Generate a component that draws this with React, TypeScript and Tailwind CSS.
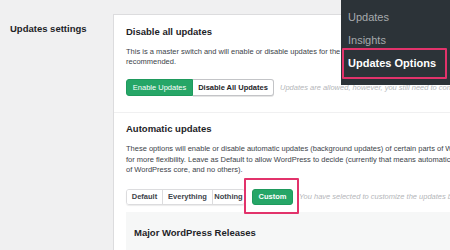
import React from 'react';

const font = { fontFamily: '"Liberation Sans", Arial, sans-serif' };

const SegButton = ({ label, width, last }: { label: string; width: string; last?: boolean }) => (
  <div
    className={`${width} shrink-0 h-full flex items-center justify-center text-[7.5px] font-bold text-[#3c434a] bg-white ${last ? '' : 'border-r border-[#dcdcde]'}`}
  >
    {label}
  </div>
);

const App: React.FC = () => {
  return (
    <div className="relative w-[450px] h-[250px] overflow-hidden bg-[#f0f0f1] flex" style={font}>
      {/* Left label */}
      <div className="w-[113px] shrink-0 pl-[10px] pt-[23px]">
        <div className="text-[9.5px] leading-[12px] font-bold text-[#1d2327]">Updates settings</div>
      </div>

      {/* Settings card */}
      <div className="mt-[14px] flex-1 min-w-0 bg-white border-l border-t border-[#dcdcde] whitespace-nowrap">
        {/* Disable all updates */}
        <div className="pl-[12px] pt-[11px] pb-[16px] border-b border-[#f0f0f1]">
          <div className="text-[9.5px] leading-[12px] font-bold text-[#1d2327]">Disable all updates</div>
          <div className="mt-[9px] text-[7.5px] leading-[10px] text-[#3c434a]">
            <div>This is a master switch and will enable or disable updates for the whole site. It is not</div>
            <div>recommended.</div>
          </div>
          <div className="mt-[12px] flex items-center">
            <div className="w-[67px] shrink-0 h-[17px] flex items-center justify-center rounded-l-[3px] bg-[#26a667] border border-[#1f9a5d] text-white text-[7.5px]">
              Enable Updates
            </div>
            <div className="w-[81px] shrink-0 h-[17px] flex items-center justify-center rounded-r-[3px] bg-white border border-l-0 border-[#c3c4c7] shadow-[0_1px_0_#e5e5e5] text-[#1d2327] text-[7.5px] font-bold">
              Disable All Updates
            </div>
            <div className="ml-[6px] text-[7.5px] italic text-[#b4b6b9]">
              Updates are allowed, however, you still need to configure them below.
            </div>
          </div>
        </div>

        {/* Automatic updates */}
        <div className="pl-[12px] pt-[10px]">
          <div className="text-[9.5px] leading-[12px] font-bold text-[#1d2327]">Automatic updates</div>
          <div className="mt-[9px] text-[7.5px] leading-[10.5px] text-[#3c434a]">
            <div>These options will enable or disable automatic updates (background updates) of certain parts of WordPress.</div>
            <div>for more flexibility. Leave as Default to allow WordPress to decide (currently that means automatic updates</div>
            <div>of WordPress core, and no others).</div>
          </div>
          <div className="mt-[13px] flex items-center">
            <div className="shrink-0 h-[16px] flex rounded-[3px] border border-[#dcdcde] overflow-hidden shadow-[0_1px_1px_#ececec]">
              <SegButton label="Default" width="w-[36px]" />
              <SegButton label="Everything" width="w-[50px]" />
              <SegButton label="Nothing" width="w-[31px]" last />
            </div>
            <div className="relative shrink-0 ml-[7px]">
              <div className="w-[41px] h-[16px] flex items-center justify-center rounded-[3px] bg-[#26a667] border border-[#1f9a5d] text-white text-[7.5px] font-bold">
                Custom
              </div>
              <div className="absolute left-[-8px] top-[-11px] w-[55px] h-[36px] border-2 border-[#e2336b] rounded-[1px]" />
            </div>
            <div className="ml-[6px] text-[7.5px] italic text-[#b4b6b9]">
              You have selected to customize the updates below.
            </div>
          </div>

          {/* Major releases panel */}
          <div className="mt-[7px] h-[60px] bg-[#f6f7f7] pl-[8px] pt-[15px]">
            <div className="text-[9.5px] leading-[12px] font-bold text-[#1d2327]">Major WordPress Releases</div>
          </div>
        </div>
      </div>

      {/* Admin menu flyout */}
      <div className="absolute left-[341px] top-0 w-[109px] h-[85px] bg-[#2c3338]">
        <div className="flex flex-col gap-[9px] pl-[7px] pt-[10px] text-[11px] leading-[14px]">
          <div className="text-[#a7aaad]">Updates</div>
          <div className="text-[#a7aaad]">Insights</div>
          <div className="text-white font-bold">Updates Options</div>
        </div>
        <div className="absolute left-[1px] top-[48px] w-[105px] h-[31px] border-2 border-[#e2336b] rounded-[1px]" />
      </div>
    </div>
  );
};

export default App;
